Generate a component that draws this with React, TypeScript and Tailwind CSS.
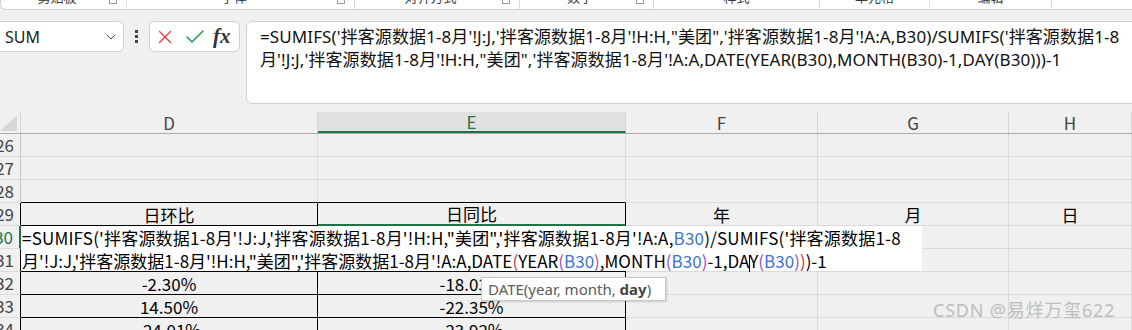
import { Check, ChevronDown, X } from 'lucide-react';

const groups = [
  { label: '剪贴板', w: 126, launcher: true },
  { label: '字体', w: 228, launcher: true },
  { label: '对齐方式', w: 165, launcher: true },
  { label: '数字', w: 134, launcher: true },
  { label: '样式', w: 166, launcher: false },
  { label: '单元格', w: 110, launcher: false },
  { label: '编辑', w: 122, launcher: false },
];

const cols = [
  { id: 'D', w: 'w-[297px]' },
  { id: 'E', w: 'w-[308px]' },
  { id: 'F', w: 'w-[192px]' },
  { id: 'G', w: 'w-[191px]' },
  { id: 'H', w: 'flex-1' },
];
const rows = [26, 27, 28, 29, 30, 31, 32, 33, 34];

const data: Record<string, string> = {
  D29: '日环比', E29: '日同比', F29: '年', G29: '月', H29: '日',
  D32: '-2.30%', E32: '-18.03%',
  D33: '14.50%', E33: '-22.35%',
  D34: '-24.01%', E34: '-23.92%',
};

const boxed = new Set(['D29', 'E29', 'D30', 'E30', 'D31', 'E31', 'D32', 'E32', 'D33', 'E33', 'D34', 'E34']);

const blue = 'text-[#3b73d4]';
const purple = 'text-[#a04fc9]';
const red = 'text-[#d6304f]';

function Ribbon() {
  return (
    <div className="h-[10px] bg-white border-b border-l border-[#d3d3d3] rounded-bl-[6px] overflow-hidden flex items-end">
      {groups.map((g) => (
        <div key={g.label} style={{ width: g.w }} className="h-[16px] shrink-0 flex items-end border-r border-[#dcdcdc]">
          <div className={`flex-1 mb-[4px] text-center text-[13px] leading-[16px] text-[#3a3a3a] ${g.launcher ? 'pl-[4px]' : ''}`}>{g.label}</div>
          {g.launcher && <div className="w-[8px] h-[8px] border border-[#9a9a9a] mr-[9px] mb-[5px]" />}
        </div>
      ))}
    </div>
  );
}

function FormulaBar() {
  return (
    <div className="mt-[11px] flex items-start h-[83px]">
      <div className="-ml-[6px] w-[130px] h-[31px] bg-white border border-[#d0d0d0] rounded-[6px] flex items-center pl-[10px] pr-[4px]">
        <span className="flex-1 text-[16px] text-[#222]">SUM</span>
        <ChevronDown size={16} strokeWidth={1.5} className="text-[#444]" />
      </div>
      <div className="ml-[11px] h-[31px] flex flex-col justify-center gap-[2px]">
        <div className="w-[3px] h-[3px] bg-[#444]" />
        <div className="w-[3px] h-[3px] bg-[#444]" />
        <div className="w-[3px] h-[3px] bg-[#444]" />
      </div>
      <div className="ml-[11px] w-[91px] h-[31px] bg-white border border-[#d0d0d0] rounded-[6px] flex items-center pl-[4px]">
        <X size={22} strokeWidth={1.5} className="text-[#e8393c]" />
        <Check size={24} strokeWidth={1.6} className="ml-[7px] text-[#2f9c4f]" />
        <span className="ml-[6px] font-['Liberation_Serif',serif] italic font-bold text-[21px] leading-none text-[#333]">fx</span>
      </div>
      <div className="ml-[6px] -mr-[12px] flex-1 h-[83px] bg-white border border-[#d0d0d0] rounded-[6px] pl-[13px] pt-[3px] text-[17px] tracking-[0.1px] leading-[23px] text-[#111] whitespace-nowrap overflow-hidden">
        <div>=SUMIFS('拌客源数据1-8月'!J:J,'拌客源数据1-8月'!H:H,"美团",'拌客源数据1-8月'!A:A,B30)/SUMIFS('拌客源数据1-8</div>
        <div>月'!J:J,'拌客源数据1-8月'!H:H,"美团",'拌客源数据1-8月'!A:A,DATE(YEAR(B30),MONTH(B30)-1,DAY(B30)))-1</div>
      </div>
    </div>
  );
}

function Sheet() {
  return (
    <div className="relative mt-[8px] font-['Noto_Sans_CJK_SC',sans-serif]">
      <div className="flex h-[22px] border-b border-[#ababab]">
        <div className="w-[21px] shrink-0 border-r border-[#d4d4d4] relative overflow-hidden">
          <div className="absolute left-0 bottom-[2px] w-0 h-0 border-l-[17px] border-l-transparent border-b-[16px] border-b-[#d8d8d8]" />
        </div>
        {cols.map((c) => (
          <div
            key={c.id}
            className={`${c.w} shrink-0 flex items-center justify-center text-[17px] border-r border-[#d4d4d4] ${c.id === 'E' ? 'bg-[#e1e1e1] text-[#217346] border-b-2 border-b-[#217346]' : 'text-[#444]'}`}
          >
            {c.id}
          </div>
        ))}
      </div>
      {rows.map((r) => (
        <div key={r} className="flex h-[23px]">
          <div
            className={`w-[21px] shrink-0 flex justify-end items-center pr-[6px] overflow-hidden whitespace-nowrap text-[17px] border-b border-[#dadada] ${r === 30 ? 'text-[#217346] border-r-2 border-r-[#217346]' : 'text-[#444]'} ${r >= 29 && r !== 30 ? 'border-r border-r-black' : ''} ${r < 29 ? 'border-r border-r-[#c6c6c6]' : ''}`}
          >
            {r}
          </div>
          {cols.map((c, i) => {
            const key = `${c.id}${r}`;
            const next = cols[i + 1] ? `${cols[i + 1].id}${r}` : '';
            const below = `${c.id}${r + 1}`;
            const rightBlack = boxed.has(key) || boxed.has(next);
            const bottomBlack = boxed.has(key) || boxed.has(below);
            const green = key === 'E29';
            return (
              <div
                key={key}
                className={`${c.w} shrink-0 flex items-center justify-center text-[17px] leading-[23px] text-black border-r ${rightBlack ? 'border-r-black' : 'border-r-[#dadada]'} ${green ? 'border-b-2 border-b-[#217346]' : bottomBlack ? 'border-b border-b-black' : 'border-b border-b-[#dadada]'}`}
              >
                {data[key] ?? ''}
              </div>
            );
          })}
        </div>
      ))}

      {/* in-cell editor */}
      <div className="absolute left-[21px] top-[114px] w-[901px] h-[45px] bg-white text-[17px] leading-[23px] text-black whitespace-nowrap pl-[1px]">
        <div className="tracking-[0.2px]">
          =SUMIFS('拌客源数据1-8月'!J:J,'拌客源数据1-8月'!H:H,"美团",'拌客源数据1-8月'!A:A,<span className={blue}>B30</span>)/SUMIFS('拌客源数据1-8
        </div>
        <div>
          月'!J:J,'拌客源数据1-8月'!H:H,"美团",'拌客源数据1-8月'!A:A,DATE<span className={red}>(</span>YEAR<span className={purple}>(</span>
          <span className={blue}>B30</span>
          <span className={purple}>)</span>,MONTH<span className={purple}>(</span>
          <span className={blue}>B30</span>
          <span className={purple}>)</span>-1,DA
          <span className="inline-block w-px h-[17px] bg-black align-middle -mr-px" />Y<span className={purple}>(</span>
          <span className={blue}>B30</span>
          <span className={purple}>)</span>
          <span className={red}>)</span>)-1
        </div>
      </div>

      {/* function tooltip */}
      <div className="absolute left-[481px] top-[165px] w-[185px] h-[24px] bg-white border border-[#c6c6c6] shadow-[1px_1px_2px_rgba(0,0,0,0.15)] pl-[6px] flex items-center font-['Noto_Sans',sans-serif] text-[15px] text-[#5b5b5b] whitespace-nowrap">
        <span>
          DATE(year, month, <b className="font-bold text-[#444]">day</b>)
        </span>
      </div>

      {/* watermark */}
      <div className="absolute left-[933px] top-[186px] font-['Noto_Sans','Noto_Sans_CJK_SC',sans-serif] text-[18px] tracking-[0.8px] leading-[24px] text-[#bdbdbd] whitespace-nowrap">
        CSDN @易烊万玺622
      </div>
    </div>
  );
}

export default function App() {
  return (
    <div className="w-[1132px] h-[330px] overflow-hidden bg-[#f0f0f0] font-['Noto_Sans','Noto_Sans_CJK_SC',sans-serif]">
      <Ribbon />
      <FormulaBar />
      <Sheet />
    </div>
  );
}
